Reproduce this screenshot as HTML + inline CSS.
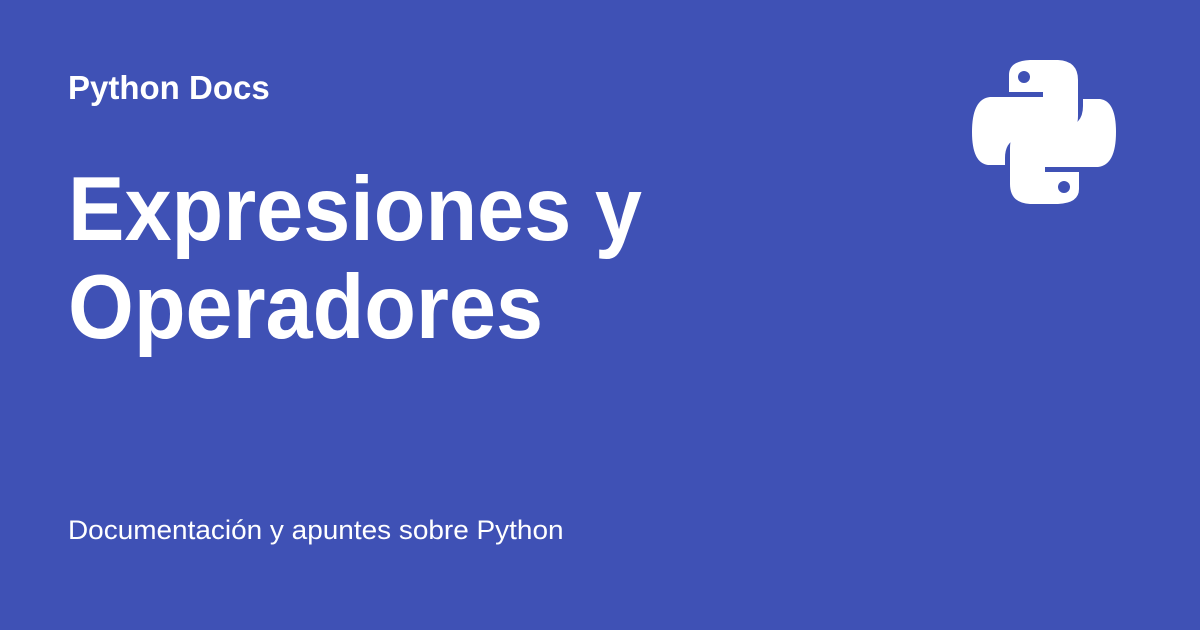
<!DOCTYPE html>
<html><head><meta charset="utf-8"><style>
body{margin:0;width:1200px;height:630px;background:#3f51b5;position:relative;overflow:hidden;font-family:"Liberation Sans",sans-serif;color:#fff}
.t{position:absolute;left:68px;white-space:nowrap;transform-origin:0 0}
</style></head><body>
<div class="t" style="top:71px;font-size:33px;line-height:1;font-weight:bold">Python Docs</div>
<div class="t" style="top:161px;font-size:91px;font-weight:bold;line-height:98px;transform:scaleX(0.93)">Expresiones y<br>Operadores</div>
<div class="t" style="top:517px;font-size:27px;line-height:1;transform:scaleX(1.035)">Documentación y apuntes sobre Python</div>
<svg style="position:absolute;left:0;top:0" width="1200" height="630">
<g fill="#fff">
<path d="M1009,75 Q1009,61 1030,60 L1058,60 Q1078,61 1078,80 L1078,116 Q1078,135 1060,136 L1025,137 Q1005,138 1005,158 L1005,165 L988,165 Q972,163 972,132 Q972,99 990,97 L1043,97 L1043,92 L1009,92 Z"/>
<path d="M1009,75 Q1009,61 1030,60 L1058,60 Q1078,61 1078,80 L1078,116 Q1078,135 1060,136 L1025,137 Q1005,138 1005,158 L1005,165 L988,165 Q972,163 972,132 Q972,99 990,97 L1043,97 L1043,92 L1009,92 Z" transform="rotate(180 1044 132)"/>
</g>
<circle cx="1024" cy="77" r="6" fill="#3f51b5"/>
<circle cx="1064" cy="187" r="6" fill="#3f51b5"/>
</svg>
</body></html>
